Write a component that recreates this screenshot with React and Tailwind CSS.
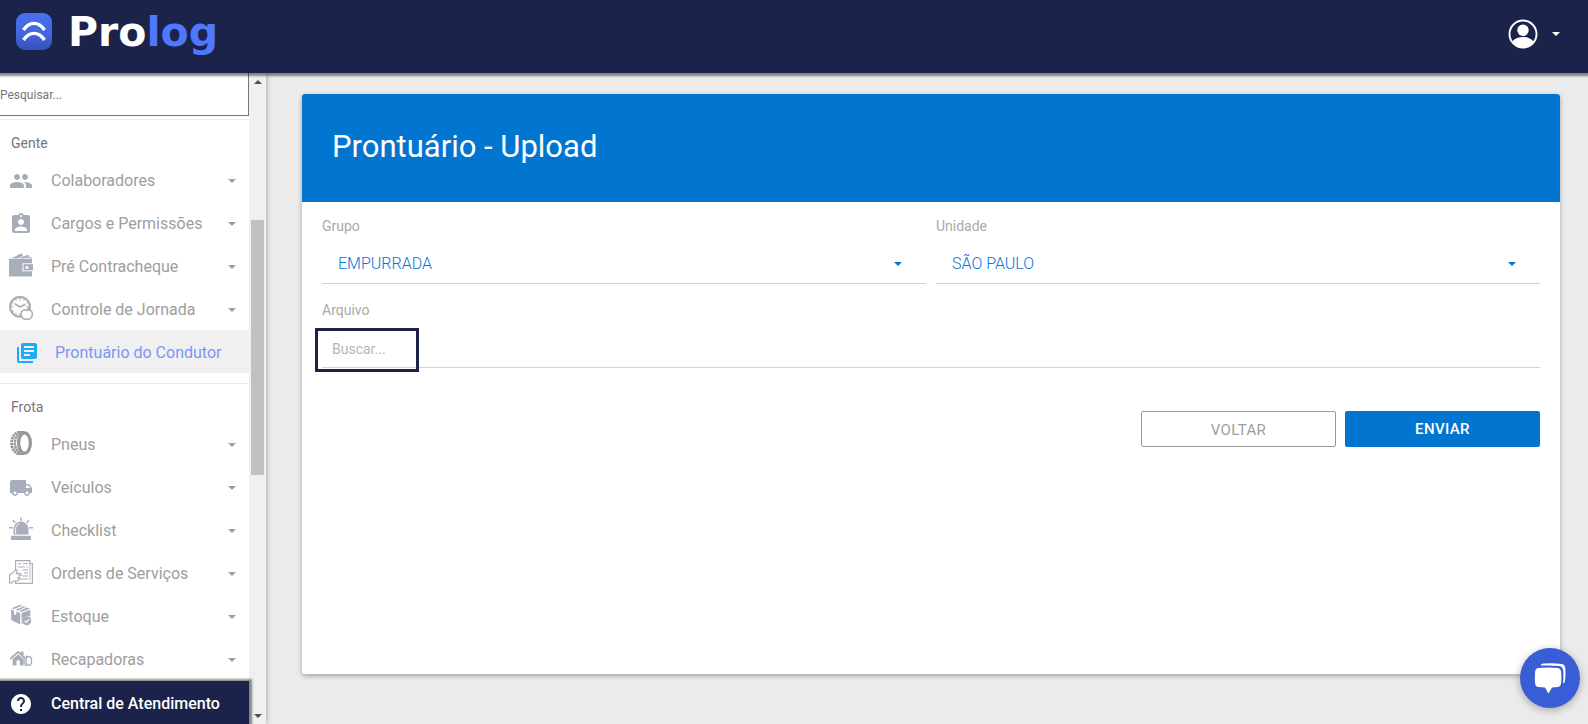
import { MdAssignmentInd, MdHelp, MdLibraryBooks, MdLocalShipping, MdPeople } from "react-icons/md";

function Caret({ className = "" }) {
  return (
    <svg viewBox="0 0 8 4" aria-hidden="true" className={`h-1 w-2 shrink-0 fill-current ${className}`}>
      <path d="M0 0h8L4 4z" />
    </svg>
  );
}

function WalletIcon() {
  return (
    <svg viewBox="0 0 24 24" aria-hidden="true" className="mb-1 size-6 fill-[#a7adba]">
      <path d="M2.500 5.300 12.500.3l1.600 2.500L8 5.300zM8.500 5.300 19.500 1.800l.9 2-5 1.500zM16.500 5.300 22.500 3.700v1.600z" />
      <path d="M0 5.800h23v17.700H0z" />
      <path d="M13.500 10.300H24v8H13.500z" fill="#fff" />
      <path d="M14.500 11.200H24v6.200h-9.500z" />
      <circle cx="18" cy="14.400" r="1.500" fill="#fff" />
    </svg>
  );
}

function ClockIcon() {
  return (
    <svg viewBox="0 0 24 24" aria-hidden="true" className="mb-1 size-6 fill-none stroke-[#adadad]">
      <circle cx="11" cy="10.800" r="9.900" strokeWidth="2.100" />
      <path d="M5.800 7.800 11 11l5.400-2.800" strokeWidth="1.700" />
      <path d="M11 2v2.400M11 17v2.400M2.200 10.800h2.400M17.400 10.800h2.400M6.600 3.300l.8 1.400M15.400 3.300l-.8 1.400M3.500 15.200l1.400-.8M6.600 18.300l.8-1.400M3.500 6.400l1.200.7M18.500 6.400l-1.200.7" strokeWidth="1.100" />
      <path d="M17.500 14.300c-2.400-1.200-5.400.2-5.400 3.800 0 2.600 2 5.200 3.800 5.200.8 0 1-.3 1.700-.3s1 .3 1.800.3c2.200 0 4-2.800 4-5.200 0-3.400-3.200-5-5.900-3.800z" fill="#fff" strokeWidth="1.500" />
      <path d="M17.500 14c0-1.400.9-2.500 2.600-2.700 0 1.700-1 2.600-2.600 2.700z" fill="#adadad" stroke="none" />
    </svg>
  );
}

function TireIcon() {
  return (
    <svg viewBox="0 0 24 24" aria-hidden="true" className="mb-1 size-6 fill-none stroke-[#979797]">
      <path d="M10.500 1.200C6 1.500 2.700 6 2.700 12s3.300 10.500 7.800 10.800" strokeWidth="3" strokeDasharray="2.200 .7" />
      <path d="M12 1.500C8 3.500 6 7.500 6 12s2 8.500 6 10.500" strokeWidth="2.200" strokeDasharray="2.600 .5" />
      <ellipse cx="15.500" cy="12" rx="5.900" ry="10.200" strokeWidth="3.200" />
      <path d="M9 .8h6M9 23.200h6" strokeWidth="1.400" />
    </svg>
  );
}

function SirenIcon() {
  return (
    <svg viewBox="0 0 24 24" aria-hidden="true" className="mb-1 size-6 fill-[#a7adba]">
      <path d="M4.500 17.500V12a7.500 7.500 0 0 1 15 0v5.500z" />
      <path d="M6.600 16.500v-4.300a5.500 5.500 0 0 1 3.800-5.400" fill="none" stroke="#fff" strokeWidth="1" />
      <rect x="2" y="18.700" width="20" height="4.300" rx=".5" />
      <path d="M12 .5v3.200M4 3.200l2.200 2.600M20 3.200l-2.200 2.600M0 10.800h3.600M20.400 10.800H24" fill="none" stroke="#a7adba" strokeWidth="1.500" />
    </svg>
  );
}

function ServiceOrderIcon() {
  return (
    <svg viewBox="0 0 24 24" aria-hidden="true" className="mb-1 size-6 fill-none stroke-[#a7adba]">
      <path d="M6.600 11V.7h14.300v2.800h2.500v19.800H6.600V21" strokeWidth="1.200" />
      <path d="M20.900 3.500v17" strokeWidth=".8" />
      <path d="M9 3.700h3M14 3.700h4.500M9 7h7M17.500 7h1.500M13.500 10h5.500M15 13h4M13.500 16h5.500M10 19h9" strokeWidth="1" />
      <path d="M.6 22.800v-8.300l3-1.500 2.800-2.800c1-.8 2.300.2 1.700 1.500l-.8 1.900h4c1.300 0 1.300 1.900 0 1.900H9.500c1.600.2 1.400 2 .2 2.100.8.400.5 1.700-.5 1.800.4.700 0 1.600-1 1.600H4.500l-1.400 1.800z" fill="#fff" strokeWidth="1.200" />
    </svg>
  );
}

function StockIcon() {
  return (
    <svg viewBox="0 0 24 24" aria-hidden="true" className="mb-1 size-6 fill-[#a7adba]">
      <path d="M2.500 5.200 11 1.800l2.300.8-8.300 3.500zM6.500 6.800l8.300-3.500 2 .8-8 3.500zM10 8.100l8-3.500 3 1.200-9 3.300z" />
      <path d="M2.200 6.400 5 7.500v3.700l2.200 1V8.400l4 1.600v11.600L2.200 17z" />
      <path d="M12.500 10.100 21.300 6.800v6.700a5.600 5.600 0 0 0-7.600 7.300l-1.200.8z" />
      <circle cx="17.800" cy="17.700" r="4.500" />
      <path d="m15.500 17.700 1.700 1.700 3-3.200" fill="none" stroke="#fff" strokeWidth="1.200" />
    </svg>
  );
}

function RetreadIcon() {
  return (
    <svg viewBox="0 0 24 24" aria-hidden="true" className="mb-1 size-6 fill-[#a7adba]">
      <path d="M9 8.400 14.500 13v6.500h-3.700v-5H7.500v5H3.700V13z" />
      <path d="m1.300 13 7.700-7 7 6.300" fill="none" stroke="#a7adba" strokeWidth="1.700" />
      <path d="M11.700 5.500h2.800V10l-2.800-2.300z" />
      <g fill="none" stroke="#a7adba">
        <ellipse cx="19.800" cy="15" rx="2.800" ry="4.400" strokeWidth="1.300" />
        <path d="M18.500 10.400c-2.500-.3-3.300 2-3.300 4.600s.8 4.600 3.300 4.400" strokeWidth="1.800" strokeDasharray="1.500 .5" />
      </g>
    </svg>
  );
}

function LogoMark() {
  return (
    <svg viewBox="0 0 36 37" aria-hidden="true" className="h-[37px] w-9">
      <defs>
        <linearGradient id="mark" x1="0" y1="0" x2="0" y2="1">
          <stop offset="0" stopColor="#4a70f0" />
          <stop offset=".6" stopColor="#4265dd" />
          <stop offset="1" stopColor="#3450b4" />
        </linearGradient>
      </defs>
      <rect width="36" height="37" rx="9" fill="url(#mark)" />
      <path d="M7.500 17C13.500 8.200 22.500 8.200 28.500 17M7.500 27C13.500 18.200 22.500 18.200 28.500 27" fill="none" stroke="#fff" strokeWidth="3.400" />
    </svg>
  );
}

function UserIcon() {
  return (
    <svg viewBox="0 0 30 30" aria-hidden="true" className="size-[30px]">
      <circle cx="15" cy="15" r="13.500" fill="none" stroke="#fff" strokeWidth="1.900" />
      <circle cx="15" cy="11.300" r="5.700" fill="#fff" />
      <path d="M4.600 22.300c2.600-3 6.300-4.300 10.400-4.300s7.800 1.300 10.400 4.300A13 13 0 0 1 15 28.500a13 13 0 0 1-10.400-6.200z" fill="#fff" />
    </svg>
  );
}

const sections = [
  {
    title: "Gente",
    items: [
      { label: "Colaboradores", icon: MdPeople },
      { label: "Cargos e Permissões", icon: MdAssignmentInd },
      { label: "Pré Contracheque", icon: WalletIcon },
      { label: "Controle de Jornada", icon: ClockIcon },
      { label: "Prontuário do Condutor", icon: MdLibraryBooks, active: true },
    ],
  },
  {
    title: "Frota",
    items: [
      { label: "Pneus", icon: TireIcon },
      { label: "Veículos", icon: MdLocalShipping },
      { label: "Checklist", icon: SirenIcon },
      { label: "Ordens de Serviços", icon: ServiceOrderIcon },
      { label: "Estoque", icon: StockIcon },
      { label: "Recapadoras", icon: RetreadIcon },
    ],
  },
];

function NavItem({ item }) {
  const Icon = item.icon;
  if (item.active) {
    return (
      <a href="#prontuario" aria-current="page" className="flex h-[43px] items-center gap-4 bg-[#f0f0f0] pt-0.5 pl-[15px] text-[#7c94fb]">
        <Icon size={24} aria-hidden="true" className="text-[#1eaaf5]" />
        <span>{item.label}</span>
      </a>
    );
  }
  return (
    <button type="button" className="flex h-[43px] w-full items-center gap-[18px] pt-0.5 pr-[13px] pl-[9px] text-left text-[#9e9e9e]">
      <Icon size={24} aria-hidden="true" className="text-[#a7adba]" />
      <span className="flex-1">{item.label}</span>
      <Caret />
    </button>
  );
}

function Scrollbar() {
  return (
    <div aria-hidden="true" className="flex w-[17px] shrink-0 flex-col items-center bg-[#f0f0f0] text-[#505050]">
      <div className="flex h-[17px] items-center">
        <Caret className="rotate-180" />
      </div>
      <div className="flex-[130]" />
      <div className="w-[13px] flex-[255] bg-[#c1c1c1]" />
      <div className="flex-[232]" />
      <div className="flex h-[17px] items-center">
        <Caret />
      </div>
    </div>
  );
}

function Sidebar() {
  return (
    <aside className="z-10 flex w-[266px] shrink-0 bg-white shadow-[0_0_6px_rgba(0,0,0,0.35)]">
      <div className="flex min-w-0 flex-1 flex-col">
        <nav className="min-h-0 flex-1 overflow-hidden">
          <input
            type="text"
            aria-label="Pesquisar"
            placeholder="Pesquisar..."
            className="block h-[43px] w-full border-r border-b border-[#767676] pt-0.5 text-xs outline-none placeholder:text-[#757575]"
          />
          {sections.map((section, i) => (
            <section key={section.title} className={i === 0 ? "mt-[3px] border-t border-[#ebebeb]" : "mt-2.5 border-t border-[#ebebeb]"}>
              <h2 className="flex h-[38px] items-end pb-[5px] pl-[11px] text-sm text-[#757575]">{section.title}</h2>
              {section.items.map((item) => (
                <NavItem key={item.label} item={item} />
              ))}
            </section>
          ))}
        </nav>
        <a
          href="#ajuda"
          className="relative flex h-[43px] shrink-0 items-center gap-[18px] bg-[#1b234a] pt-0.5 pl-[9px] font-medium text-white shadow-[1px_0_2px_2px_rgba(0,0,0,0.45)]"
        >
          <MdHelp size={24} aria-hidden="true" />
          Central de Atendimento
        </a>
      </div>
      <Scrollbar />
    </aside>
  );
}

function SelectField({ id, label, value }) {
  return (
    <div>
      <label htmlFor={id} className="block text-sm text-[#aaaaaa]">
        {label}
      </label>
      <div className="mt-2 flex h-10 items-center border-b border-[#d2d2d2] pr-6 text-[#0275d8]">
        <select id={id} className="h-full flex-1 appearance-none bg-transparent pl-4 text-base font-light outline-none">
          <option>{value}</option>
        </select>
        <Caret />
      </div>
    </div>
  );
}

export default function App() {
  return (
    <div className="flex h-screen flex-col bg-[#ebebeb] font-[Roboto,sans-serif] text-base">
      <header className="z-20 flex h-[73px] shrink-0 items-center justify-between bg-[#1b234a] pr-7 pl-4 text-white shadow-[0_1px_2px_2px_rgba(0,0,0,0.45)]">
        <a href="#inicio" className="flex items-center gap-4 pb-2.5">
          <LogoMark />
          <span className="font-['DejaVu_Sans',sans-serif] text-[41px] leading-10 font-bold">
            Pro<span className="text-[#5078ff]">log</span>
          </span>
        </a>
        <button type="button" aria-label="Conta" className="flex items-center gap-[14px] pb-[5px]">
          <UserIcon />
          <Caret />
        </button>
      </header>

      <div className="flex min-h-0 flex-1">
        <Sidebar />
        <main className="min-w-0 flex-1 pt-[21px] pr-7 pb-[50px] pl-9">
          <div className="flex h-full flex-col overflow-hidden rounded-[3px] bg-white shadow-[0_2px_5px_rgba(0,0,0,0.3)]">
            <div className="flex h-[108px] shrink-0 items-center bg-[#0275d1] px-[30px] pb-0.5">
              <h1 className="text-[31px] leading-10 text-white">Prontuário - Upload</h1>
            </div>
            <form className="px-5 pt-[14px]">
              <div className="grid grid-cols-2 gap-x-[10px]">
                <SelectField id="grupo" label="Grupo" value="EMPURRADA" />
                <SelectField id="unidade" label="Unidade" value="SÃO PAULO" />
              </div>
              <div className="mt-4">
                <label htmlFor="arquivo" className="block text-sm text-[#aaaaaa]">
                  Arquivo
                </label>
                <div className="relative mt-2">
                  <input
                    id="arquivo"
                    type="text"
                    placeholder="Buscar..."
                    className="block h-10 w-full border-b border-[#d2d2d2] px-[10px] pt-0.5 text-sm outline-none placeholder:text-[#b5b5b5]"
                  />
                  <span aria-hidden="true" className="pointer-events-none absolute top-0 -left-[7px] h-11 w-[104px] border-3 border-[#1b234a]" />
                </div>
              </div>
              <div className="mt-[43px] flex justify-end gap-[9px]">
                <button type="button" className="h-9 w-[195px] rounded-xs border border-[#999999] pt-0.5 text-[15px] tracking-wide text-[#9e9e9e]">
                  VOLTAR
                </button>
                <button type="submit" className="h-9 w-[195px] rounded-xs bg-[#0275d1] text-[15px] font-medium tracking-wide text-white">
                  ENVIAR
                </button>
              </div>
            </form>
          </div>
        </main>
      </div>

      <button
        type="button"
        aria-label="Abrir chat"
        className="fixed right-2 bottom-4 z-30 flex size-[60px] items-center justify-center rounded-full bg-[#395dd5] shadow-[0_2px_8px_rgba(0,0,0,0.3)]"
      >
        <svg viewBox="0 0 32 30" aria-hidden="true" className="h-[30px] w-8 fill-white">
          <path d="M4 5Q14 3.800 24 5q2.600.4 3 3 .8 6 0 13-.4 2.600-3 3l-6 .6-3 5.100q-.6.700-1.200 0L11 24.600l-7-.6q-2.500-.4-2.800-3-.7-6.500 0-13Q1.500 5.400 4 5z" />
          <path d="M6.800 2.600C7 1 8 .7 9.500.6q9.500-.8 18 .3 3.300.4 3.700 3.600.7 7-.2 13.500-.4 2-2 2.500.7-6.500.2-13-.4-4-4.200-4.500-9-.9-18.200-.4z" />
        </svg>
      </button>
    </div>
  );
}
